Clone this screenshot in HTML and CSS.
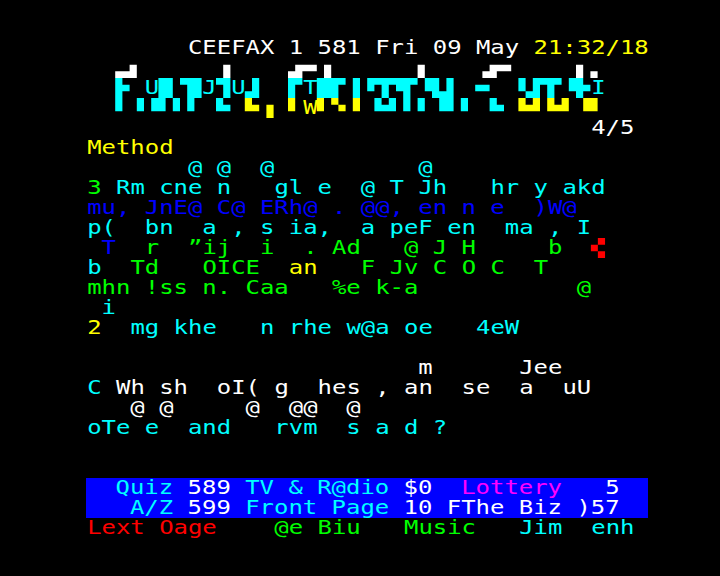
FILE: index.html
```html
<!DOCTYPE html>
<html lang="en">
<head>
    <meta charset="UTF-8">
    <title>Ceefax 581</title>
    <link rel="stylesheet" href="styles.css">
</head>
<body>
    <div class="screen">
        <div class="row">        CEEFAX 1 581 Fri 09 May <span class="yellow">21:32/18</span></div>

        <!-- masthead: rows 1 to 3, blocks drawn on the 2x3 cell grid -->
        <div class="masthead">
            <svg class="mosaic" viewBox="0 0 80 9" preserveAspectRatio="none">
                <path fill="#fff" d="M8 1h1v1h-1z M6 2h3v1h-3z M21 1h1v2h-1z M31 1h3v1h-3z M30 2h2v1h-2z M35 1h1v2h-1z M48 1h1v2h-1z M58 1h3v1h-3z M57 2h2v1h-2z M70 1h1v2h-1z M72 2h1v1h-1z"/>
                <path fill="#0ff" d="M6 3h1v5h-1z M7 4h1v1h-1z M9 6h1v2h-1z M12 3h2v3h-2z M11 6h2v2h-2z M14 6h1v2h-1z M15 3h3v1h-3z M16 4h2v2h-2z M16 6h1v2h-1z M20 3h2v1h-2z M21 4h1v2h-1z M20 6h1v2h-1z M21 7h1v1h-1z M25 3h1v2h-1z M24 5h2v1h-2z M30 3h2v1h-2z M30 4h1v2h-1z M34 3h4v1h-4z M34 4h3v2h-3z M39 3h1v3h-1z M41 3h7v1h-7z M41 4h1v1h-1z M43 4h1v2h-1z M45 4h2v1h-2z M46 5h1v3h-1z M42 6h1v2h-1z M43 7h1v1h-1z M44 6h1v2h-1z M48 6h1v2h-1z M49 3h2v2h-2z M50 5h2v1h-2z M51 6h1v2h-1z M52 3h1v5h-1z M54 6h1v2h-1z M56 4h2v1h-2z M58 6h1v2h-1z M59 7h1v1h-1z M62 3h1v2h-1z M63 5h2v1h-2z M64 3h4v1h-4z M64 4h1v1h-1z M66 4h1v2h-1z M69 3h2v1h-2z M69 4h3v1h-3z M70 5h1v1h-1z"/>
                <path fill="#ff0" d="M24 6h1v2h-1z M25 7h1v1h-1z M27 7h1v2h-1z M30 6h1v2h-1z M34 6h1v2h-1z M36 6h1v1h-1z M37 7h1v1h-1z M39 6h1v2h-1z M62 6h1v2h-1z M63 7h1v1h-1z M64 6h1v2h-1z M66 6h1v2h-1z M67 7h1v1h-1z M68 6h1v2h-1z M71 6h2v2h-2z"/>
            </svg>
            <div class="row"></div>
            <div class="row cyan">     U   J U    T                   I</div>
            <div class="row yellow">                W</div>
        </div>

        <div class="row">                                    4/5</div>
        <div class="row yellow"> Method</div>
        <div class="row cyan">        @ @  @          @</div>
        <div class="row cyan"> <span class="green">3</span> Rm cne n   gl e  @ T Jh   hr y akd</div>
        <div class="row blue"> mu, JnE@ C@ ERh@ . @@, en n e  )W@</div>
        <div class="row cyan"> p(  bn  a , s ia,  a peF en  ma , I</div>
        <div class="row green">  <span class="blue">T</span>  r  ”ij  i  . Ad   @ J H     b  <svg class="glyph" viewBox="0 0 2 3" preserveAspectRatio="none"><path fill="#f00" d="M1 0h1v1h-1z M0 1h1v1h-1z M1 2h1v1h-1z"/></svg></div>
        <div class="row green"> <span class="cyan">b</span>  Td   OICE  <span class="yellow">an</span>   F Jv C O C  T</div>
        <div class="row green"> mhn !ss n. Caa   %e k-a           @</div>
        <div class="row cyan">  i</div>
        <div class="row cyan"> <span class="yellow">2</span>  mg khe   n rhe w@a oe   4eW</div>
        <div class="row"></div>
        <div class="row">                        m      Jee</div>
        <div class="row"> <span class="cyan">C</span> Wh sh  oI( g  hes , an  se  a  uU</div>
        <div class="row">    @ @     @  @@  @</div>
        <div class="row cyan"> oTe e  and   rvm  s a d ?</div>
        <div class="row"></div>
        <div class="row"></div>

        <div class="band">
            <div class="row">  <span class="cyan">Quiz</span> 589 <span class="cyan">TV &amp; R@dio</span> $0  <span class="magenta">Lottery</span>   5</div>
            <div class="row">   <span class="cyan">A/Z</span> 599 <span class="cyan">Front Page</span> 10 FThe Biz )57</div>
        </div>

        <div class="row red"> Lext Oage    <span class="green">@e Biu</span>   <span class="green">Music</span>   <span class="cyan">Jim</span>  <span class="cyan">enh</span></div>
    </div>
</body>
</html>
```

FILE: styles.css
```css
/* 40 x 25 teletext grid: cell is 14.4 x 20 */
body {
    margin: 0;
    background-color: #000;
}

.screen {
    width: 576px;
    padding: 38px 72px;
    color: #fff;
    font-family: "DejaVu Sans Mono", monospace;
    font-size: 19px;
}

/* glyphs are wide on teletext, so the 11.44px advance is stretched to 14.4 */
.row {
    width: 456px;
    height: 20px;
    line-height: 19px;
    white-space: pre;
    text-indent: 0.6px;
    transform: scaleX(1.2589);
    transform-origin: left top;
}

.masthead {
    position: relative;
}

.mosaic {
    position: absolute;
    top: 0;
    left: 0;
    width: 576px;
    height: 60px;
}

.glyph {
    display: inline-block;
    width: 11.44px;
    height: 20px;
    vertical-align: top;
}

.band {
    margin-left: 14.4px;
    background-color: #00f;
}

.band .row {
    width: 444px;
}

.red { color: #f00; }
.green { color: #0f0; }
.yellow { color: #ff0; }
.blue { color: #00f; }
.magenta { color: #f0f; }
.cyan { color: #0ff; }
```
